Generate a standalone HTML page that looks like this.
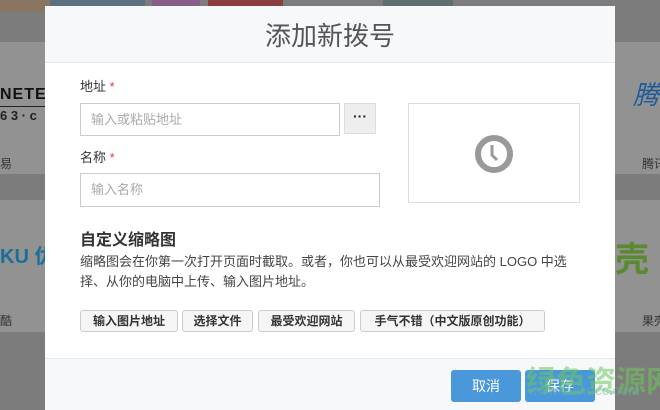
<!DOCTYPE html>
<html><head><meta charset="utf-8"><style>
*{box-sizing:border-box;margin:0;padding:0}
html,body{width:660px;height:410px;overflow:hidden}
body{position:relative;background:#7c7c7c;font-family:"Liberation Sans","Noto Sans CJK SC",sans-serif}
.abs{position:absolute;white-space:nowrap}
.tile{position:absolute;background:#929292}
.modal{position:absolute;left:45px;top:6px;width:570px;height:404px;background:#fff}
.hdr{position:absolute;left:0;top:0;width:570px;height:57px;background:#f7f8fa;border-bottom:1px solid #e6e8eb;text-align:center;font-size:26px;color:#555;line-height:60px}
.lbl{position:absolute;font-size:13px;color:#333}
.lbl b{color:#e33;font-weight:normal}
.inp{position:absolute;border:1px solid #ccc;background:#fff;font-size:13px;color:#aaa;padding-left:10px}
.btn{position:absolute;top:304px;height:22px;border:1px solid #ccc;border-radius:3px;background:#f5f5f5;font-size:12px;font-weight:bold;color:#333;text-align:center;line-height:20px;white-space:nowrap}
.foot{position:absolute;left:0;top:352px;width:570px;height:52px;background:#f7f8fa;border-top:1px solid #e6e8eb}
.pb{position:absolute;top:11px;width:70px;height:32px;background:#4a97da;border-radius:3px;color:#fff;font-size:14px;text-align:center;line-height:32px}
</style></head><body>
<div class="abs" style="left:0;top:0;width:50px;height:12px;background:#8a7560"></div>
<div class="abs" style="left:50px;top:0;width:95px;height:6px;background:#5f6f82"></div>
<div class="abs" style="left:152px;top:0;width:48px;height:6px;background:#8a5c8a"></div>
<div class="abs" style="left:208px;top:0;width:75px;height:6px;background:#8a3f3f"></div>
<div class="abs" style="left:383px;top:0;width:70px;height:6px;background:#607070"></div>
<div class="tile" style="left:0;top:42px;width:45px;height:132px"></div>
<div class="tile" style="left:0;top:200px;width:45px;height:132px"></div>
<div class="tile" style="left:615px;top:42px;width:45px;height:132px"></div>
<div class="tile" style="left:615px;top:200px;width:45px;height:132px"></div>
<div class="abs" style="left:0;top:86px;font-size:16px;font-weight:bold;color:#111;letter-spacing:1px">NETE</div>
<div class="abs" style="left:0;top:106px;width:45px;border-top:1px solid #222"></div>
<div class="abs" style="left:0;top:108px;font-size:13px;font-weight:bold;color:#222">6 3 · c</div>
<div class="abs" style="left:0;top:155px;font-size:12px;color:#333">易</div>
<div class="abs" style="left:0;top:240px;font-size:20px;font-weight:bold;color:#1a6e9c">KU 优</div>
<div class="abs" style="left:0;top:312px;font-size:12px;color:#333">酷</div>
<div class="abs" style="left:633px;top:75px;font-size:26px;font-style:italic;color:#1a5a9a">腾</div>
<div class="abs" style="left:642px;top:155px;font-size:12px;color:#333">腾讯</div>
<div class="abs" style="left:615px;top:232px;font-size:34px;font-weight:bold;color:#5a8a30">壳</div>
<div class="abs" style="left:642px;top:312px;font-size:12px;color:#333">果壳</div>
<div class="modal">
<div class="hdr">添加新拨号</div>
<div class="lbl" style="left:35px;top:70px">地址 <b>*</b></div>
<div class="inp" style="left:35px;top:97px;width:260px;height:33px;line-height:31px">输入或粘贴地址</div>
<div class="abs" style="left:299px;top:97px;width:32px;height:31px;background:#eee;border:1px solid #ddd;text-align:center;font-weight:bold;font-size:14px;line-height:24px;color:#222">···</div>
<div class="abs" style="left:363px;top:97px;width:172px;height:100px;border:1px solid #ddd"></div>
<svg class="abs" style="left:428px;top:127px" width="42" height="42" viewBox="0 0 42 42"><circle cx="21" cy="21" r="16" fill="none" stroke="#999" stroke-width="6"/><path d="M19 12v10l5 5" fill="none" stroke="#999" stroke-width="3"/></svg>
<div class="lbl" style="left:35px;top:141px">名称 <b>*</b></div>
<div class="inp" style="left:35px;top:167px;width:300px;height:34px;line-height:32px">输入名称</div>
<div class="abs" style="left:35px;top:220px;font-size:16px;font-weight:bold;color:#333">自定义缩略图</div>
<div class="abs" style="left:35px;top:246px;font-size:13px;color:#444;line-height:20px">缩略图会在你第一次打开页面时截取。或者，你也可以从最受欢迎网站的 LOGO 中选<br>择、从你的电脑中上传、输入图片地址。</div>
<div class="btn" style="left:35px;width:98px">输入图片地址</div>
<div class="btn" style="left:137px;width:71px">选择文件</div>
<div class="btn" style="left:213px;width:97px">最受欢迎网站</div>
<div class="btn" style="left:315px;width:185px">手气不错（中文版原创功能）</div>
<div class="foot">
<div class="pb" style="left:406px">取消</div>
<div class="pb" style="left:480px">保存</div>
</div>
</div>
<div class="abs" style="left:526px;top:357px;font-size:30px;font-weight:bold;color:rgba(110,200,90,0.55);letter-spacing:0">绿色资源网</div>
<div class="abs" style="left:528px;top:382px;font-size:14px;color:rgba(110,170,200,0.5)">www.downcc.com</div>
</body></html>
